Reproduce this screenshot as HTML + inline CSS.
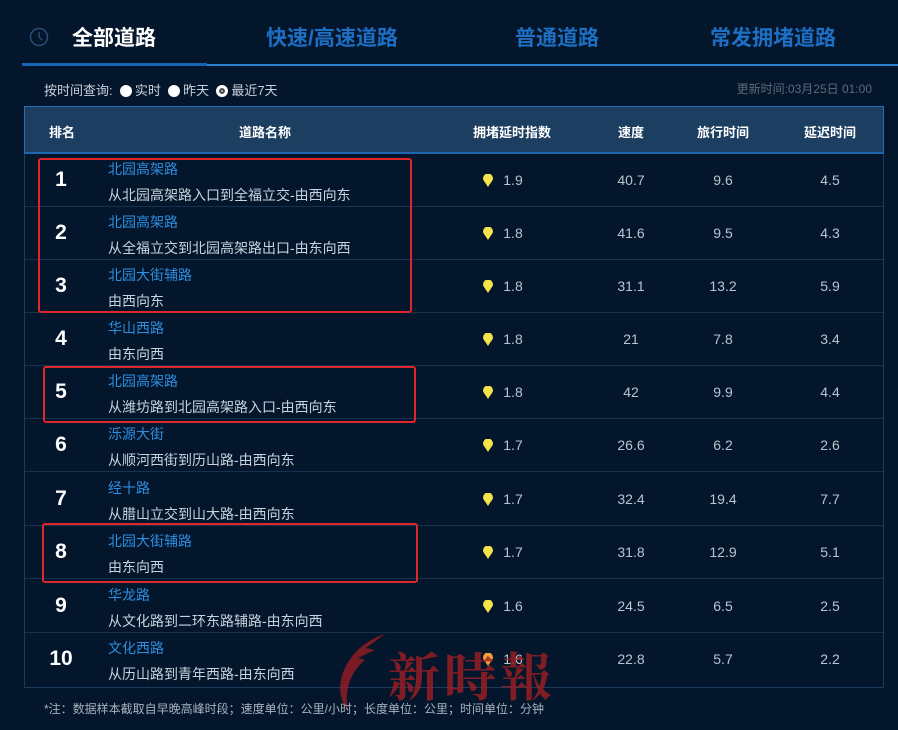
<!DOCTYPE html>
<html><head><meta charset="utf-8"><style>
*{margin:0;padding:0;box-sizing:border-box}
body{width:898px;height:730px;background:#04162b;font-family:"Liberation Sans","Noto Sans CJK SC",sans-serif;position:relative;overflow:hidden;color:#c9d3df}
.tab{position:absolute;top:22px;font-size:21px;font-weight:bold;color:#1d6fc4}
.line{position:absolute;top:64px;left:22px;width:876px;height:2px;background:#2c7fd2}
.line2{position:absolute;top:63px;left:22px;width:185px;height:3px;background:#1863b3}
.q{position:absolute;top:80px;font-size:13px;color:#c8d0da}
.r{display:inline-block;width:12px;height:12px;border-radius:50%;background:#fff;vertical-align:-2px;margin-right:3px}
.tbl{position:absolute;left:24px;top:106px;width:860px;height:582px;border:1px solid #1b3c5c}
.hd{position:absolute;left:24px;top:106px;width:860px;height:48px;background:#1c3e60;border:1px solid #2a6cb0;border-bottom:2px solid #1f66b0}
.hd span{position:absolute;top:15px;font-size:13px;font-weight:bold;color:#fff;transform:translateX(-50%)}
.row{position:absolute;left:25px;width:858px;height:53px;border-bottom:1px solid #17324e}
.rk{position:absolute;left:36px;top:14px;font-size:21px;font-weight:bold;color:#fff;transform:translateX(-50%)}
.n1{position:absolute;left:83px;top:5px;font-size:14px;color:#2e8ee0}
.n2{position:absolute;left:83px;top:31px;font-size:14px;color:#c9d3df}
.v{position:absolute;top:18px;font-size:14px;color:#b9c4d0;transform:translateX(-50%)}
.pin{position:absolute;left:458px;top:20px;width:10px;height:13px}
.box{position:absolute;border:2px solid #e0262b;border-radius:3px}
</style></head><body>
<svg style="position:absolute;left:29px;top:27px" width="20" height="20"><circle cx="10" cy="10" r="8.5" fill="none" stroke="#2a4d75" stroke-width="1.5"/><path d="M10 5v5l3 3" stroke="#2a4d75" stroke-width="1.5" fill="none"/></svg>
<div class="tab" style="left:72px;color:#fff">全部道路</div>
<div class="tab" style="left:266px">快速/高速道路</div>
<div class="tab" style="left:515px">普通道路</div>
<div class="tab" style="left:710px">常发拥堵道路</div>
<div class="line"></div><div class="line2"></div>
<div class="q" style="left:44px">按时间查询: &nbsp;<span class="r"></span>实时 &nbsp;<span class="r"></span>昨天 &nbsp;<span class="r" style="background:#ccc;border:3px solid #fff;box-shadow:inset 0 0 0 2px #444"></span>最近7天</div>
<div class="q" style="right:26px;color:#5d6a78;font-size:12px">更新时间:03月25日 01:00</div>
<div class="tbl"></div>
<div class="hd"><span style="left:37px">排名</span><span style="left:240px">道路名称</span><span style="left:487px">拥堵延时指数</span><span style="left:606px">速度</span><span style="left:698px">旅行时间</span><span style="left:805px">延迟时间</span></div>
<div class="row" style="top:154px"><div class="rk">1</div><div class="n1">北园高架路</div><div class="n2">从北园高架路入口到全福立交-由西向东</div><svg class="pin" viewBox="0 0 10 13"><path d="M5 13C2 8 0 6.5 0 4.5A5 5 0 0 1 10 4.5C10 6.5 8 8 5 13Z" fill="#f6e24a"/></svg><div class="v" style="left:488px">1.9</div><div class="v" style="left:606px">40.7</div><div class="v" style="left:698px">9.6</div><div class="v" style="left:805px">4.5</div></div>
<div class="row" style="top:207px"><div class="rk">2</div><div class="n1">北园高架路</div><div class="n2">从全福立交到北园高架路出口-由东向西</div><svg class="pin" viewBox="0 0 10 13"><path d="M5 13C2 8 0 6.5 0 4.5A5 5 0 0 1 10 4.5C10 6.5 8 8 5 13Z" fill="#f6e24a"/></svg><div class="v" style="left:488px">1.8</div><div class="v" style="left:606px">41.6</div><div class="v" style="left:698px">9.5</div><div class="v" style="left:805px">4.3</div></div>
<div class="row" style="top:260px"><div class="rk">3</div><div class="n1">北园大街辅路</div><div class="n2">由西向东</div><svg class="pin" viewBox="0 0 10 13"><path d="M5 13C2 8 0 6.5 0 4.5A5 5 0 0 1 10 4.5C10 6.5 8 8 5 13Z" fill="#f6e24a"/></svg><div class="v" style="left:488px">1.8</div><div class="v" style="left:606px">31.1</div><div class="v" style="left:698px">13.2</div><div class="v" style="left:805px">5.9</div></div>
<div class="row" style="top:313px"><div class="rk">4</div><div class="n1">华山西路</div><div class="n2">由东向西</div><svg class="pin" viewBox="0 0 10 13"><path d="M5 13C2 8 0 6.5 0 4.5A5 5 0 0 1 10 4.5C10 6.5 8 8 5 13Z" fill="#f6e24a"/></svg><div class="v" style="left:488px">1.8</div><div class="v" style="left:606px">21</div><div class="v" style="left:698px">7.8</div><div class="v" style="left:805px">3.4</div></div>
<div class="row" style="top:366px"><div class="rk">5</div><div class="n1">北园高架路</div><div class="n2">从潍坊路到北园高架路入口-由西向东</div><svg class="pin" viewBox="0 0 10 13"><path d="M5 13C2 8 0 6.5 0 4.5A5 5 0 0 1 10 4.5C10 6.5 8 8 5 13Z" fill="#f6e24a"/></svg><div class="v" style="left:488px">1.8</div><div class="v" style="left:606px">42</div><div class="v" style="left:698px">9.9</div><div class="v" style="left:805px">4.4</div></div>
<div class="row" style="top:419px"><div class="rk">6</div><div class="n1">泺源大街</div><div class="n2">从顺河西街到历山路-由西向东</div><svg class="pin" viewBox="0 0 10 13"><path d="M5 13C2 8 0 6.5 0 4.5A5 5 0 0 1 10 4.5C10 6.5 8 8 5 13Z" fill="#f6e24a"/></svg><div class="v" style="left:488px">1.7</div><div class="v" style="left:606px">26.6</div><div class="v" style="left:698px">6.2</div><div class="v" style="left:805px">2.6</div></div>
<div class="row" style="top:473px"><div class="rk">7</div><div class="n1">经十路</div><div class="n2">从腊山立交到山大路-由西向东</div><svg class="pin" viewBox="0 0 10 13"><path d="M5 13C2 8 0 6.5 0 4.5A5 5 0 0 1 10 4.5C10 6.5 8 8 5 13Z" fill="#f6e24a"/></svg><div class="v" style="left:488px">1.7</div><div class="v" style="left:606px">32.4</div><div class="v" style="left:698px">19.4</div><div class="v" style="left:805px">7.7</div></div>
<div class="row" style="top:526px"><div class="rk">8</div><div class="n1">北园大街辅路</div><div class="n2">由东向西</div><svg class="pin" viewBox="0 0 10 13"><path d="M5 13C2 8 0 6.5 0 4.5A5 5 0 0 1 10 4.5C10 6.5 8 8 5 13Z" fill="#f6e24a"/></svg><div class="v" style="left:488px">1.7</div><div class="v" style="left:606px">31.8</div><div class="v" style="left:698px">12.9</div><div class="v" style="left:805px">5.1</div></div>
<div class="row" style="top:580px"><div class="rk">9</div><div class="n1">华龙路</div><div class="n2">从文化路到二环东路辅路-由东向西</div><svg class="pin" viewBox="0 0 10 13"><path d="M5 13C2 8 0 6.5 0 4.5A5 5 0 0 1 10 4.5C10 6.5 8 8 5 13Z" fill="#f6e24a"/></svg><div class="v" style="left:488px">1.6</div><div class="v" style="left:606px">24.5</div><div class="v" style="left:698px">6.5</div><div class="v" style="left:805px">2.5</div></div>
<div class="row" style="top:633px;border-bottom:none"><div class="rk">10</div><div class="n1">文化西路</div><div class="n2">从历山路到青年西路-由东向西</div><svg class="pin" viewBox="0 0 10 13"><path d="M5 13C2 8 0 6.5 0 4.5A5 5 0 0 1 10 4.5C10 6.5 8 8 5 13Z" fill="#f6a03a"/></svg><div class="v" style="left:488px">1.6</div><div class="v" style="left:606px">22.8</div><div class="v" style="left:698px">5.7</div><div class="v" style="left:805px">2.2</div></div>
<div class="box" style="left:38px;top:158px;width:374px;height:155px"></div>
<div class="box" style="left:43px;top:366px;width:373px;height:57px"></div>
<div class="box" style="left:42px;top:523px;width:376px;height:60px"></div>
<svg style="position:absolute;left:330px;top:632px" width="60" height="80"><path d="M55 2C30 10 12 30 10 55C10 65 14 74 18 78C14 60 20 40 35 28L28 26L45 18L36 16Z" fill="rgba(170,30,35,0.7)"/></svg>
<div style="position:absolute;left:388px;top:636px;font-size:52px;font-family:'Noto Serif CJK SC',serif;font-weight:bold;color:rgba(160,30,35,0.8);letter-spacing:4px">新時報</div>
<div style="position:absolute;left:44px;top:700px;font-size:12px;color:#a8b2bd">*注：数据样本截取自早晚高峰时段；速度单位：公里/小时；长度单位：公里；时间单位：分钟</div>
</body></html>
